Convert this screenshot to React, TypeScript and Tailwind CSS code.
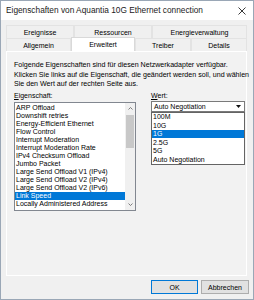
import React from 'react';

const font = { fontFamily: '"Liberation Sans", Arial, sans-serif' };

const properties = [
  'ARP Offload',
  'Downshift retries',
  'Energy-Efficient Ethernet',
  'Flow Control',
  'Interrupt Moderation',
  'Interrupt Moderation Rate',
  'IPv4 Checksum Offload',
  'Jumbo Packet',
  'Large Send Offload V1 (IPv4)',
  'Large Send Offload V2 (IPv4)',
  'Large Send Offload V2 (IPv6)',
  'Link Speed',
  'Locally Administered Address',
];

const values = ['100M', '10G', '1G', '2.5G', '5G', 'Auto Negotiation'];

function Tab({ label, w, active }: { label: string; w: string; active?: boolean }) {
  return (
    <div
      className={
        active
          ? `${w} -mt-[1px] h-[14px] bg-white border border-b-0 border-[#d9d9d9] flex items-center justify-center`
          : `${w} h-[13px] border border-b-0 border-[#e3e3e3] flex items-center justify-center`
      }
    >
      {label}
    </div>
  );
}

export default function App() {
  return (
    <div
      className="w-[254px] h-[300px] bg-[#f0f0f0] border border-[#9aa7b6] flex flex-col text-[7px] text-black leading-none overflow-hidden whitespace-nowrap"
      style={font}
    >
      {/* title bar */}
      <div className="h-[19px] bg-white flex items-center justify-between pl-[5px] pr-[7px] shrink-0">
        <span className="text-[8.3px] text-[#1a1a1a]">Eigenschaften von Aquantia 10G Ethernet connection</span>
        <svg width="8" height="8" viewBox="0 0 8 8" className="mt-[1px]">
          <path d="M0.5 0.5 L7.5 7.5 M7.5 0.5 L0.5 7.5" stroke="#222" strokeWidth="0.9" />
        </svg>
      </div>

      <div className="flex flex-col pl-[5px] pr-[6px] pt-[5px]">
        {/* tabs */}
        <div className="flex">
          <Tab label="Ereignisse" w="w-[68px]" />
          <Tab label="Ressourcen" w="w-[78px]" />
          <Tab label="Energieverwaltung" w="w-[95px]" />
        </div>
        <div className="flex items-end">
          <Tab label="Allgemein" w="w-[65px]" />
          <Tab label="Erweitert" w="w-[64px]" active />
          <Tab label="Treiber" w="w-[56px]" />
          <Tab label="Details" w="w-[56px]" />
        </div>

        {/* panel */}
        <div className="h-[225px] border border-white bg-[#f2f2f2] pl-[7px] pr-[1px] pt-[9px]">
          <p className="leading-[9.5px] text-[7.1px]">
            Folgende Eigenschaften sind für diesen Netzwerkadapter verfügbar.
            <br />
            Klicken Sie links auf die Eigenschaft, die geändert werden soll, und wählen
            <br />
            Sie den Wert auf der rechten Seite aus.
          </p>

          <div className="flex mt-[1px]">
            {/* left column */}
            <div className="w-[122px] flex flex-col">
              <div className="h-[9px] flex items-center">
                <span>
                  <span className="underline">E</span>igenschaft:
                </span>
              </div>
              <div className="mt-[2px] h-[109px] border border-[#828790] bg-white flex">
                <div className="flex-1 pt-[1px] overflow-hidden">
                  {properties.map((p) => (
                    <div
                      key={p}
                      className={
                        p === 'Link Speed'
                          ? 'h-[8px] bg-[#0078d7] text-white pl-[1px] flex items-center'
                          : 'h-[8px] pl-[1px] flex items-center'
                      }
                    >
                      {p}
                    </div>
                  ))}
                </div>
                <div className="w-[10px] bg-[#f0f0f0] flex flex-col items-center">
                  <div className="h-[12px] flex items-center justify-center">
                    <svg width="5" height="3" viewBox="0 0 5 3">
                      <path d="M0.5 2.5 L2.5 0.5 L4.5 2.5" fill="none" stroke="#606060" strokeWidth="0.8" />
                    </svg>
                  </div>
                  <div className="w-[8px] h-[33px] bg-[#c8c8c8]" />
                  <div className="flex-1" />
                  <div className="h-[11px] flex items-center justify-center">
                    <svg width="5" height="3" viewBox="0 0 5 3">
                      <path d="M0.5 0.5 L2.5 2.5 L4.5 0.5" fill="none" stroke="#606060" strokeWidth="0.8" />
                    </svg>
                  </div>
                </div>
              </div>
            </div>

            {/* right column */}
            <div className="ml-[15px] w-[94px] flex flex-col">
              <div className="h-[9px] flex items-center">
                <span>
                  <span className="underline">W</span>ert:
                </span>
              </div>
              <div className="relative mt-[1px]">
                <div className="h-[11px] border border-[#7a7a7a] bg-white flex items-center pl-[2px] pr-[2px]">
                  <span className="flex-1">Auto Negotiation</span>
                  <div className="w-[8px] h-[7px] flex items-center justify-center">
                    <svg width="5" height="3" viewBox="0 0 5 3">
                      <path d="M0 0 L5 0 L2.5 3 Z" fill="#111" />
                    </svg>
                  </div>
                </div>
                <div className="absolute left-0 top-[11px] w-[94px] border border-[#646464] bg-white">
                  {values.map((v) => (
                    <div
                      key={v}
                      className={
                        v === '1G'
                          ? 'h-[8.5px] bg-[#0078d7] text-white pl-[1px] flex items-center'
                          : 'h-[8.5px] pl-[1px] flex items-center'
                      }
                    >
                      {v}
                    </div>
                  ))}
                </div>
              </div>
            </div>
          </div>
        </div>

        {/* buttons */}
        <div className="flex justify-end gap-[3px] mt-[4px] -mr-[2px]">
          <button className="w-[47px] h-[14px] border border-[#0078d7] bg-[#e1e1e1] text-[7px] leading-none">
            OK
          </button>
          <button className="w-[48px] h-[14px] border border-[#adadad] bg-[#e1e1e1] text-[7px] leading-none">
            Abbrechen
          </button>
        </div>
      </div>
    </div>
  );
}
